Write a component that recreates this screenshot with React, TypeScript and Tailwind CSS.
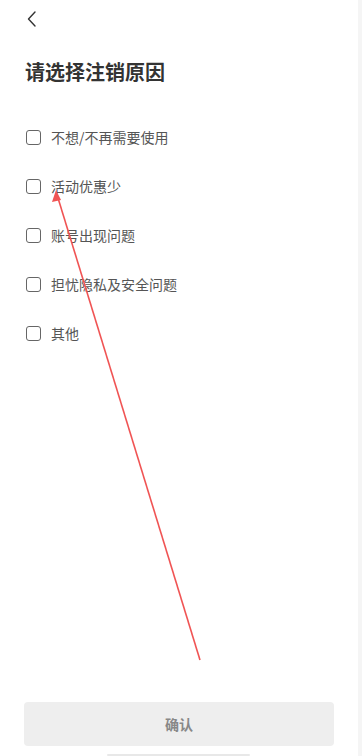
import React, { useState } from 'react';

const reasons = ['不想/不再需要使用', '活动优惠少', '账号出现问题', '担忧隐私及安全问题', '其他'];

export default function App() {
  const [checked, setChecked] = useState<number[]>([]);

  const toggle = (i: number) =>
    setChecked(prev => (prev.includes(i) ? prev.filter(x => x !== i) : [...prev, i]));

  return (
    <div
      className="relative w-[362px] h-[756px] overflow-hidden bg-white flex"
      style={{ fontFamily: '"Noto Sans CJK SC", "Noto Sans", sans-serif' }}
    >
      <div className="flex-1 flex flex-col">
        {/* Header */}
        <div className="h-[40px] pl-[25px] pt-[10px]">
          <svg width="14" height="18" viewBox="0 0 14 18" fill="none">
            <path d="M10 2 L3.5 9 L10 16" stroke="#333" strokeWidth="1.4" strokeLinecap="round" strokeLinejoin="round" />
          </svg>
        </div>

        <h1 className="mt-[17px] pl-[25px] text-[20px] leading-[30px] font-bold text-[#333]">请选择注销原因</h1>

        {/* Reasons */}
        <div className="mt-[26px] flex flex-col">
          {reasons.map((r, i) => (
            <label key={r} className="flex items-center h-[49px] pl-[26px] cursor-pointer" onClick={() => toggle(i)}>
              <span
                className={`w-[15px] h-[15px] rounded-[3px] border-[1.3px] border-[#666] ${
                  checked.includes(i) ? 'bg-[#333]' : ''
                }`}
              />
              <span className="ml-[10px] text-[14px] text-[#555]">{r}</span>
            </label>
          ))}
        </div>

        <div className="flex-1" />

        {/* Confirm */}
        <div className="px-[24px]">
          <button className="w-full h-[44px] rounded-[4px] bg-[#eeeeee] text-[14px] font-bold text-[#888]">确认</button>
        </div>
        <div className="h-[10px] flex items-end pl-[107px]">
          <div className="w-[143px] h-[2px] rounded-full bg-[#e8e8e8]" />
        </div>
      </div>

      {/* right edge strip */}
      <div className="w-[4px] bg-[#f5f5f5]" />

      {/* annotation arrow */}
      <svg className="absolute left-0 top-0 pointer-events-none" width="362" height="756">
        <line x1="200" y1="660" x2="58" y2="198" stroke="#f05454" strokeWidth="1.6" />
        <polygon points="56,190 52,202 61,200" fill="#f05454" />
      </svg>
    </div>
  );
}
